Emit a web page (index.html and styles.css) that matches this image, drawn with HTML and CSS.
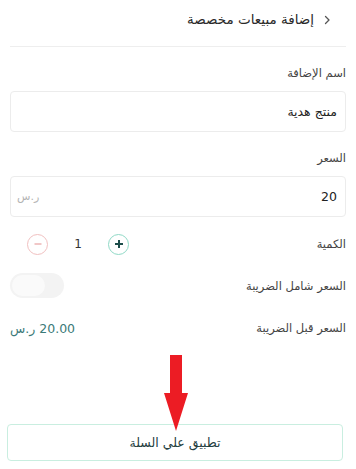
FILE: index.html
```html
<!DOCTYPE html>
<html lang="ar" dir="rtl">
<head>
<meta charset="utf-8">
<link rel="stylesheet" href="styles.css">
</head>
<body>
<div class="page">
  <header class="header">
    <svg class="back" width="8" height="10" viewBox="0 0 8 10"><path d="M2.5 1.5 L6 5 L2.5 8.5" fill="none" stroke="#555" stroke-width="1.3" stroke-linecap="round" stroke-linejoin="round"/></svg>
    <h1 class="title">إضافة مبيعات مخصصة</h1>
  </header>
  <div class="form">
    <label class="label">اسم الإضافة</label>
    <div class="input"><span class="value">منتج هدية</span></div>
    <label class="label">السعر</label>
    <div class="input"><span class="value">20</span><span class="unit">ر.س</span></div>
    <div class="row qty-row">
      <span class="row-label">الكمية</span>
      <div class="stepper">
        <span class="circle plus"><svg width="10" height="10" viewBox="0 0 10 10"><path d="M5 1v8M1 5h8" stroke="#1d4d4a" stroke-width="2"/></svg></span>
        <span class="qty">1</span>
        <span class="circle minus"><svg width="10" height="10" viewBox="0 0 10 10"><path d="M1.5 5h7" stroke="#e9a9a9" stroke-width="1.3"/></svg></span>
      </div>
    </div>
    <div class="row toggle-row">
      <span class="row-label">السعر شامل الضريبة</span>
      <span class="toggle"><span class="knob"></span></span>
    </div>
    <div class="row pre-row">
      <span class="row-label">السعر قبل الضريبة</span>
      <span class="amount">20.00 ر.س</span>
    </div>
  </div>
  <div class="footer">
    <button class="apply">تطبيق علي السلة</button>
  </div>
  <svg class="arrow" width="26" height="78" viewBox="0 0 26 78"><path d="M7 0 H19 V38 H25 L13 76 L1 38 H7 Z" fill="#ec1c24"/></svg>
</div>
</body>
</html>
```
FILE: styles.css
```css
* { box-sizing: border-box; }
html, body { margin: 0; padding: 0; background: #fff; }
body {
  font-family: "DejaVu Sans", "Noto Sans", sans-serif;
  color: #3a3a3a;
  width: 356px;
  height: 469px;
  overflow: hidden;
}
.page { position: relative; height: 469px; display: flex; flex-direction: column; }
.header {
  display: flex;
  gap: 9px;
  margin: 0 10px;
  padding: 9px 15px 0 0;
  height: 47px;
  align-items: flex-start;
  border-bottom: 1px solid #eeeeee;
}
.back { margin-top: 6px; }
.title {
  margin: 0;
  font-size: 13.5px;
  font-weight: normal;
  color: #2a2a2a;
  line-height: 20px;
}
.form { padding: 0 10px; display: flex; flex-direction: column; }
.label {
  font-size: 11.5px;
  color: #444;
  margin-top: 17px;
  line-height: 18px;
}
.input {
  margin-top: 9px;
  height: 41px;
  border: 1px solid #ececec;
  border-radius: 4px;
  display: flex;
  align-items: center;
  justify-content: space-between;
  padding: 0 8px 0 6px;
}
.value { font-size: 12.5px; color: #222; }
.unit { font-size: 11px; color: #b3b3b3; }
.row { display: flex; align-items: center; justify-content: space-between; }
.row-label { font-size: 11.5px; color: #444; }
.qty-row { margin-top: 16px; height: 22px; }
.stepper { display: flex; align-items: center; margin-left: 17px; }
.circle {
  width: 21px; height: 21px; border-radius: 50%;
  display: flex; align-items: center; justify-content: center;
}
.plus { border: 1.3px solid #8fd9c6; }
.minus { border: 1.3px solid #f1c0c0; }
.qty { width: 60px; text-align: center; font-size: 12px; color: #333; }
.toggle-row { margin-top: 18px; height: 25px; }
.toggle {
  width: 54px; height: 25px; border-radius: 13px;
  background: #f3f3f3; position: relative; display: block;
}
.knob {
  position: absolute; left: 2px; top: 2px;
  width: 33px; height: 21px; border-radius: 11px;
  background: #fafafa;
}
.pre-row { margin-top: 18px; height: 24px; }
.amount { font-size: 12.5px; color: #3b7a78; direction: rtl; }
.footer { margin-top: auto; padding: 0 13px 8px 7px; }
.apply {
  width: 100%;
  height: 37px;
  background: #fff;
  border: 1.3px solid #c9eee0;
  border-radius: 4px;
  font-family: inherit;
  font-size: 12.5px;
  font-weight: normal;
  color: #24403f;
}
.arrow { position: absolute; left: 163px; top: 355px; }
```
